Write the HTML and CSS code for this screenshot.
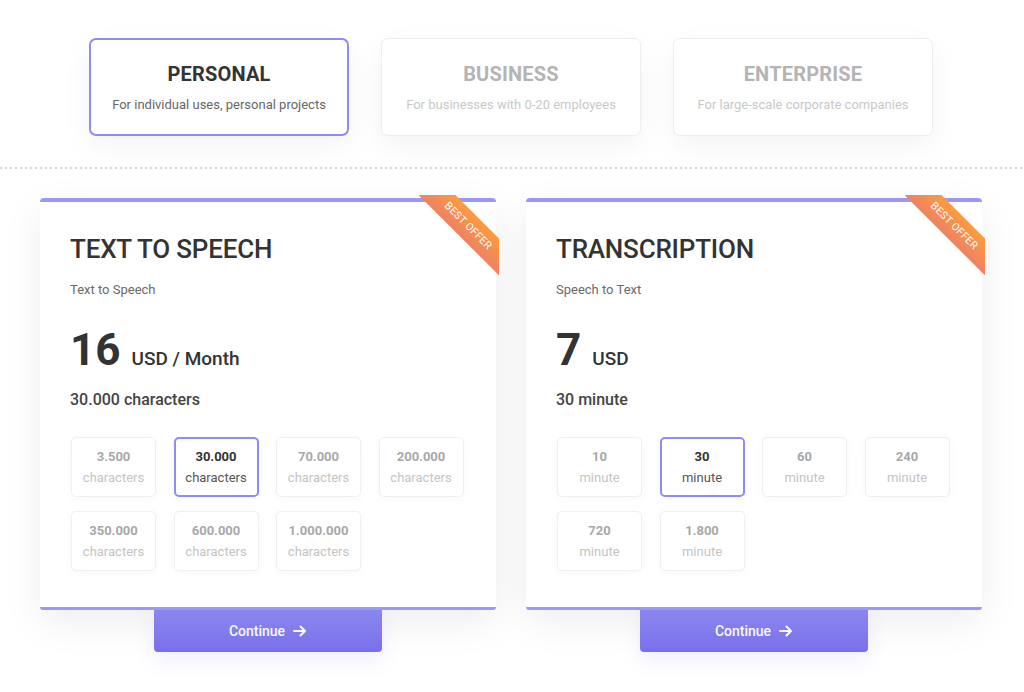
FILE: index.html
```html
<!DOCTYPE html>
<html lang="en">
<head>
<meta charset="utf-8">
<title>Pricing</title>
<link rel="stylesheet" href="styles.css">
</head>
<body>
<div class="page">
  <div class="tabs">
    <div class="tab active">
      <div class="tab-title">PERSONAL</div>
      <div class="tab-sub">For individual uses, personal projects</div>
    </div>
    <div class="tab">
      <div class="tab-title">BUSINESS</div>
      <div class="tab-sub">For businesses with 0-20 employees</div>
    </div>
    <div class="tab">
      <div class="tab-title">ENTERPRISE</div>
      <div class="tab-sub">For large-scale corporate companies</div>
    </div>
  </div>

  <div class="divider"></div>

  <div class="cards">
    <div class="plan">
      <div class="card">
        <div class="card-bar"></div>
        <div class="ribbon-wrap"><div class="ribbon">BEST OFFER</div></div>
        <div class="card-body">
          <h2 class="card-title">TEXT TO SPEECH</h2>
          <div class="card-sub">Text to Speech</div>
          <div class="price"><span class="amount">16</span><span class="unit">USD / Month</span></div>
          <div class="quota">30.000 characters</div>
          <div class="options">
            <div class="opt"><b>3.500</b><span>characters</span></div>
            <div class="opt sel"><b>30.000</b><span>characters</span></div>
            <div class="opt"><b>70.000</b><span>characters</span></div>
            <div class="opt"><b>200.000</b><span>characters</span></div>
            <div class="opt"><b>350.000</b><span>characters</span></div>
            <div class="opt"><b>600.000</b><span>characters</span></div>
            <div class="opt"><b>1.000.000</b><span>characters</span></div>
          </div>
        </div>
        <div class="card-bottom"></div>
      </div>
      <button class="continue">Continue <svg class="arrow" viewBox="0 0 14 12" width="14" height="12"><path d="M1 6h11M7.5 1.5L12 6l-4.5 4.5" fill="none" stroke="#fff" stroke-width="2" stroke-linecap="round" stroke-linejoin="round"/></svg></button>
    </div>

    <div class="plan">
      <div class="card">
        <div class="card-bar"></div>
        <div class="ribbon-wrap"><div class="ribbon">BEST OFFER</div></div>
        <div class="card-body">
          <h2 class="card-title">TRANSCRIPTION</h2>
          <div class="card-sub">Speech to Text</div>
          <div class="price"><span class="amount">7</span><span class="unit">USD</span></div>
          <div class="quota">30 minute</div>
          <div class="options">
            <div class="opt"><b>10</b><span>minute</span></div>
            <div class="opt sel"><b>30</b><span>minute</span></div>
            <div class="opt"><b>60</b><span>minute</span></div>
            <div class="opt"><b>240</b><span>minute</span></div>
            <div class="opt"><b>720</b><span>minute</span></div>
            <div class="opt"><b>1.800</b><span>minute</span></div>
          </div>
        </div>
        <div class="card-bottom"></div>
      </div>
      <button class="continue">Continue <svg class="arrow" viewBox="0 0 14 12" width="14" height="12"><path d="M1 6h11M7.5 1.5L12 6l-4.5 4.5" fill="none" stroke="#fff" stroke-width="2" stroke-linecap="round" stroke-linejoin="round"/></svg></button>
    </div>
  </div>
</div>
</body>
</html>
```

FILE: styles.css
```css
* { box-sizing: border-box; }
html, body { margin: 0; padding: 0; background: #fff; }
body { font-family: Roboto, "Noto Sans", sans-serif; color: #333; }

.page { width: 1024px; height: 692px; padding-top: 38px; overflow: hidden; }

.tabs { display: flex; justify-content: center; gap: 32px; padding-right: 2px; }
.tab {
  width: 260px; height: 98px;
  border: 1px solid #eeeeee; border-radius: 7px; background: #fff;
  box-shadow: 0 10px 30px rgba(0,0,0,0.05);
  display: flex; flex-direction: column; align-items: center;
  padding-top: 23px;
}
.tab.active { border: 2px solid #8e8bf8; padding-top: 22px; }
.tab-title { font-size: 20px; font-weight: 700; color: #b4b4b4; letter-spacing: 0.2px; line-height: 24px; }
.tab.active .tab-title { color: #333; }
.tab-sub { margin-top: 11px; font-size: 13px; color: #c8c8c8; line-height: 16px; }
.tab.active .tab-sub { color: #666; }

.divider {
  margin-top: 31px; height: 2px;
  background-image: repeating-linear-gradient(90deg, #d6d6d6 0 2px, transparent 2px 5px);
}

.cards { display: flex; justify-content: center; gap: 30px; margin-top: 29px; padding-right: 2px; }
.plan { width: 456px; display: flex; flex-direction: column; align-items: center; }
.card {
  position: relative; width: 100%; background: #fff; border-radius: 5px;
  box-shadow: 0 12px 40px rgba(0,0,0,0.07);
}
.card-bar { height: 4px; background: #9a97fa; border-radius: 5px 5px 0 0; }
.card-bottom { height: 3px; background: #9a97fa; border-radius: 0 0 5px 5px; }
.card-body { padding: 31px 30px 33px 30px; height: 405px; }

.ribbon-wrap { position: absolute; top: -3px; right: -3px; width: 80px; height: 80px; overflow: hidden; }
.ribbon {
  position: absolute; left: -16px; top: 18px; width: 130px; height: 26px;
  transform: rotate(45deg);
  background: linear-gradient(180deg, #fb9b41, #ee8262);
  color: #fff; font-size: 10.5px; text-align: center; line-height: 26px; letter-spacing: 0.3px;
}

.card-title { margin: 0; font-size: 26px; font-weight: 500; color: #333; line-height: 32px; letter-spacing: -0.2px; }
.card-sub { margin-top: 17px; font-size: 13px; color: #6a6a6a; line-height: 16px; }
.price { margin-top: 26px; display: flex; align-items: baseline; gap: 11px; }
.amount { font-size: 44px; font-weight: 700; color: #333; line-height: 52px; }
.unit { font-size: 19px; font-weight: 500; color: #333; }
.quota { margin-top: 14px; font-size: 16px; font-weight: 500; color: #444; line-height: 20px; }

.options { margin-top: 27px; display: grid; grid-template-columns: repeat(4, 85px); column-gap: 17.5px; row-gap: 14px; padding-left: 1px; }
.opt {
  height: 60px; border: 1px solid #f0f0f0; border-radius: 5px; background: #fff;
  box-shadow: 0 2px 10px rgba(0,0,0,0.03);
  display: flex; flex-direction: column; align-items: center; justify-content: center; gap: 5px;
}
.opt b { font-size: 13px; font-weight: 700; color: #a8a8a8; line-height: 16px; }
.opt span { font-size: 13px; color: #c4c4c4; line-height: 16px; }
.opt.sel { border: 2px solid #8e8bf8; }
.opt.sel b { color: #333; }
.opt.sel span { color: #555; }

.continue {
  width: 228px; height: 43px; border: 0; margin-top: -1px;
  border-radius: 0 0 4px 4px;
  background: linear-gradient(180deg, #928ffb, #7a6feb);
  color: #fff; font-family: inherit; font-size: 14px; font-weight: 500;
  display: flex; align-items: center; justify-content: center; gap: 8px;
  box-shadow: 0 8px 20px rgba(122,111,235,0.12);
}
.arrow { display: block; }
```
